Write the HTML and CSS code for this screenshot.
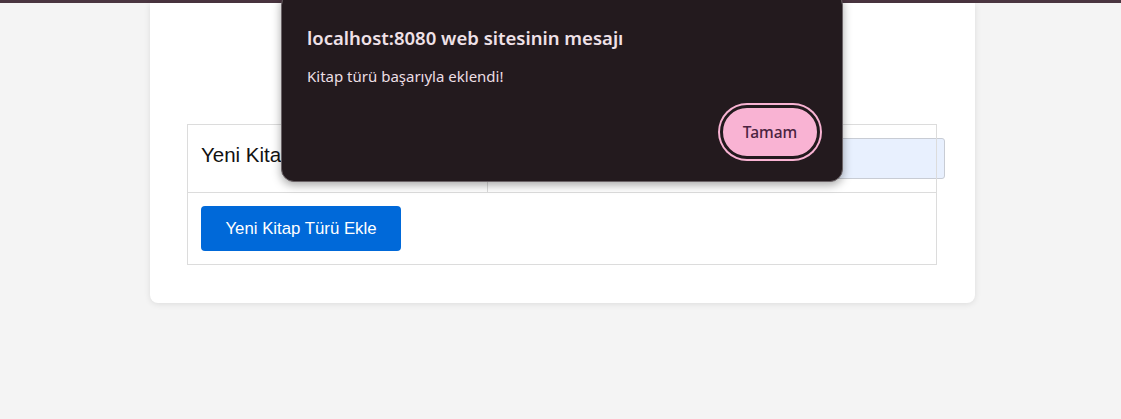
FILE: index.html
```html
<!DOCTYPE html>
<html lang="tr">
<head>
<meta charset="utf-8">
<title>Kitap Türü Ekle</title>
<link rel="stylesheet" href="styles.css">
</head>
<body>
<div class="topbar"></div>
<main class="card">
  <table class="form-table">
    <tr>
      <td class="label-cell">Yeni Kitap Türü Adı:</td>
      <td class="input-cell"><input class="text-input" type="text" value=""></td>
    </tr>
    <tr>
      <td colspan="2" class="action-cell"><button class="primary-btn" type="button">Yeni Kitap Türü Ekle</button></td>
    </tr>
  </table>
</main>
<div class="dialog" role="dialog">
  <div class="dialog-title">localhost:8080 web sitesinin mesajı</div>
  <div class="dialog-msg">Kitap türü başarıyla eklendi!</div>
  <div class="dialog-actions">
    <button class="dialog-btn" type="button">Tamam</button>
  </div>
</div>
</body>
</html>
```
FILE: styles.css
```css
html, body {
  margin: 0;
  padding: 0;
}
body {
  background: #f4f4f4;
  font-family: "Liberation Sans", Arial, sans-serif;
  height: 419px;
  overflow: hidden;
  position: relative;
}
.topbar {
  height: 3px;
  background: #4a3540;
}
.card {
  box-sizing: border-box;
  width: 825px;
  margin-left: 150px;
  background: #fff;
  border-radius: 0 0 8px 8px;
  box-shadow: 0 1px 6px rgba(0,0,0,0.10);
  padding: 121px 38px 38px 37px;
}
.form-table {
  width: 100%;
  border-collapse: collapse;
}
.form-table td {
  border: 1px solid #dcdcdc;
  padding: 13px;
  vertical-align: middle;
}
.form-table td.label-cell {
  width: 273px;
  font-size: 20.5px;
  color: #111;
  padding-bottom: 18px;
  padding-top: 10px;
}
.text-input {
  display: block;
  box-sizing: content-box;
  width: 100%;
  height: 19px;
  padding: 10px;
  border: 1px solid #c8ccd4;
  border-radius: 3px;
  background: #e8f0fe;
  font-size: 16px;
  font-family: inherit;
  margin: 0;
}
.primary-btn {
  display: block;
  width: 200px;
  height: 45px;
  border: 0;
  border-radius: 4px;
  background: #0069d9;
  color: #fff;
  font-family: "Liberation Sans", Arial, sans-serif;
  font-size: 16.8px;
  padding: 0;
}
.dialog {
  position: absolute;
  left: 281px;
  top: -8px;
  width: 562px;
  height: 190px;
  box-sizing: border-box;
  background: #231a1e;
  border: 1px solid #6a6266;
  border-radius: 13px;
  box-shadow: 0 3px 10px rgba(0,0,0,0.35);
  padding: 33px 22px 0 25px;
  font-family: "Noto Sans", "Open Sans", sans-serif;
}
.dialog-title {
  font-size: 18.5px;
  font-weight: 600;
  color: #efe1e7;
  line-height: 24px;
}
.dialog-msg {
  margin-top: 16px;
  font-size: 15px;
  color: #ecdfe4;
  line-height: 20px;
}
.dialog-actions {
  display: flex;
  justify-content: flex-end;
  margin-top: 19px;
}
.dialog-btn {
  box-sizing: border-box;
  width: 100px;
  height: 54px;
  border-radius: 27px;
  border: 3px solid #231a1e;
  background: #f9b3d3;
  box-shadow: 0 0 0 2px #f9b3d3;
  outline: none;
  color: #4b2340;
  font-family: "Noto Sans", "Open Sans", sans-serif;
  font-size: 15.5px;
  font-weight: 500;
  padding: 0;
}
```
